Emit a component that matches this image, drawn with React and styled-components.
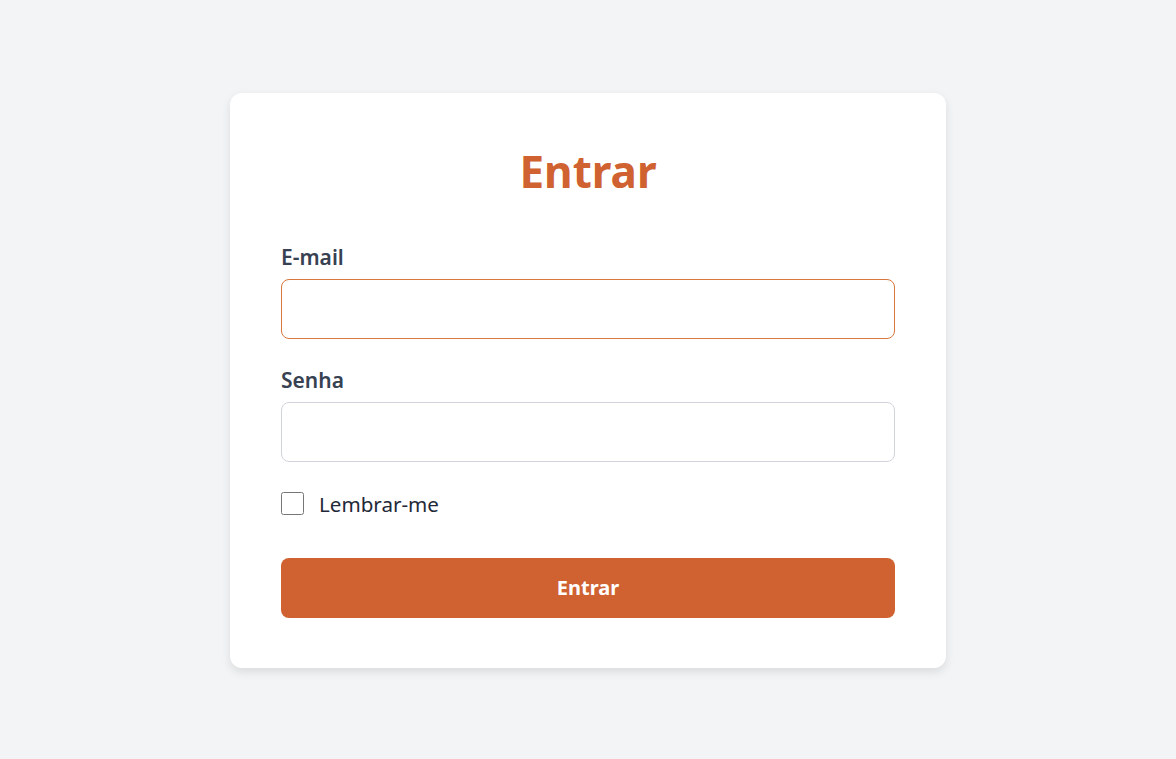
import styled, { createGlobalStyle } from 'styled-components';

const GlobalStyle = createGlobalStyle`
  * {
    box-sizing: border-box;
  }
  html, body {
    margin: 0;
    padding: 0;
    background-color: #f3f4f6;
    font-family: "Noto Sans", "Open Sans", sans-serif;
  }
`;

const Page = styled.div`
  min-height: 759px;
  display: flex;
  justify-content: center;
  padding-top: 93px;
`;

const Card = styled.div`
  width: 716px;
  height: 575px;
  background-color: #fff;
  border-radius: 12px;
  padding: 51px 51px 50px;
  box-shadow: 0 4px 10px rgba(0, 0, 0, 0.1);
`;

const Title = styled.h1`
  margin: 1px 0 44px;
  font-size: 44px;
  line-height: 1.2;
  font-weight: 700;
  text-align: center;
  color: #cf6230;
`;

const Form = styled.form`
  display: flex;
  flex-direction: column;
  gap: 25px;
`;

const Field = styled.div`
  display: flex;
  flex-direction: column;
  & + & {
    margin-top: 1px;
  }
`;

const Label = styled.label`
  font-size: 21px;
  line-height: 30px;
  font-weight: 600;
  color: #374151;
  margin-bottom: 7px;
`;

const Input = styled.input`
  height: 60px;
  width: 100%;
  padding: 0 19px;
  font-family: inherit;
  font-size: 20px;
  border-radius: 8px;
  border: 1px solid ${(p) => (p.$active ? '#d9773f' : '#d1d5db')};
  outline: none;
  color: #111827;
  caret-color: #000;
  &:focus {
    border-color: #d9773f;
  }
`;

const CheckRow = styled.label`
  margin-top: 2px;
  display: flex;
  align-items: center;
  gap: 15px;
  font-size: 20.6px;
  line-height: 30px;
  color: #1f2937;
`;

const Checkbox = styled.input`
  width: 23px;
  height: 23px;
  margin: 0;
`;

const Button = styled.button`
  margin-top: 14px;
  height: 60px;
  width: 100%;
  border: none;
  border-radius: 8px;
  background-color: #cf6230;
  color: #fff;
  font-family: inherit;
  font-size: 20px;
  font-weight: 700;
  cursor: pointer;
`;

const App = () => {
  return (
    <>
      <GlobalStyle />
      <Page>
        <Card>
          <Title>Entrar</Title>
          <Form onSubmit={(e) => e.preventDefault()}>
            <Field>
              <Label htmlFor="email">E-mail</Label>
              <Input id="email" type="email" $active autoFocus />
            </Field>
            <Field>
              <Label htmlFor="senha">Senha</Label>
              <Input id="senha" type="password" />
            </Field>
            <CheckRow>
              <Checkbox type="checkbox" />
              Lembrar-me
            </CheckRow>
            <Button type="submit">Entrar</Button>
          </Form>
        </Card>
      </Page>
    </>
  );
};

export default App;
